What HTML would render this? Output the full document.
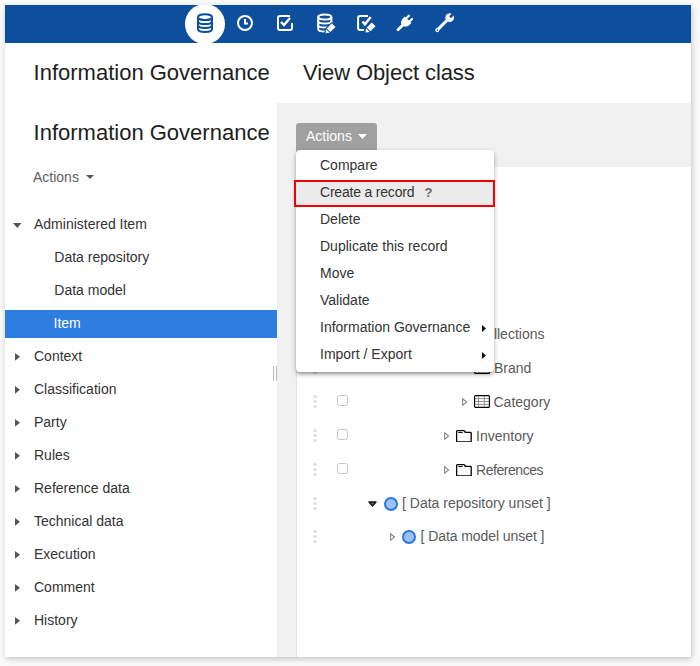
<!DOCTYPE html>
<html><head><meta charset="utf-8">
<style>
html,body{margin:0;padding:0;width:700px;height:666px;overflow:hidden;background:#fafafa;}
body{font-family:"Liberation Sans",sans-serif;position:relative;}
.abs{position:absolute;}
#frame{position:absolute;left:5px;top:5px;width:686px;height:652px;background:#fff;box-shadow:1px 2px 6px rgba(0,0,0,0.22);overflow:hidden;}
#bar{position:absolute;left:0;top:0;width:686px;height:38px;background:#0e4f9d;}
.t{position:absolute;white-space:nowrap;line-height:20px;}
.title{font-size:22px;color:#1e1e1e;line-height:26px;}
.side{font-size:14px;color:#333;}
.menu{font-size:14px;color:#333;}
.tree{font-size:14px;color:#5a5a5a;}
</style></head><body>
<div id="frame">
  <div id="bar"></div>
  <!-- white circle -->
  <div class="abs" style="left:180px;top:-1.5px;width:40px;height:40px;border-radius:50%;background:#fff;"></div>
  <svg class="abs" style="left:0;top:0" width="686" height="38" viewBox="0 0 686 38">
    <!-- database icon -->
    <g fill="none" stroke="#0e4f9d" stroke-width="2">
      <ellipse cx="200" cy="12.2" rx="7" ry="2.9"/>
      <path d="M193 12.2v11.8c0 1.7 3.1 2.9 7 2.9s7-1.2 7-2.9v-11.8"/>
      <path d="M193 16.2c0 1.7 3.1 2.9 7 2.9s7-1.2 7-2.9"/>
      <path d="M193 20.1c0 1.7 3.1 2.9 7 2.9s7-1.2 7-2.9"/>
    </g>
    <!-- clock -->
    <g fill="none" stroke="#fff" stroke-width="2">
      <circle cx="240" cy="18" r="7"/>
      <path d="M240 14v4.5h3"/>
    </g>
    <!-- checkbox -->
    <g fill="none" stroke="#fff" stroke-width="2">
      <path d="M285 11h-10a2 2 0 0 0-2 2v10a2 2 0 0 0 2 2h10a2 2 0 0 0 2-2v-5"/>
      <path d="M276 17l3 3 6-7" stroke-width="2.4"/>
    </g>
    <!-- db edit -->
    <g fill="none" stroke="#fff" stroke-width="2">
      <ellipse cx="319.8" cy="12" rx="6.6" ry="2.6"/>
      <path d="M313.2 12v12c0 1.5 2.9 2.6 6.6 2.6s6.6-1.1 6.6-2.6v-12"/>
      <path d="M313.2 16c0 1.5 2.9 2.6 6.6 2.6s6.6-1.1 6.6-2.6"/>
      <path d="M313.2 20c0 1.5 2.9 2.6 6.6 2.6s6.6-1.1 6.6-2.6"/>
    </g>
    <g transform="translate(325.4 23.4) rotate(45)">
      <path d="M-2.6 -4.6h5.2v7.4h-5.2zM-2.6 3.6h5.2l-2.6 3.4z" fill="#0e4f9d" stroke="#0e4f9d" stroke-width="2.4" stroke-linejoin="round"/>
      <path d="M-2.6 -4.6h5.2v7.2h-5.2z" fill="#fff"/>
      <path d="M-2.6 3.6h5.2l-2.6 3.2z" fill="#fff"/>
    </g>
    <!-- check edit -->
    <g fill="none" stroke="#fff" stroke-width="2">
      <path d="M363 10.9H355.1a2 2 0 0 0-2 2V23a2 2 0 0 0 2 2H359"/>
      <path d="M357.5 16.5l2.4 2.8 5.8-7.4" stroke-width="2.4"/>
    </g>
    <g transform="translate(365.4 22.6) rotate(45)">
      <path d="M-2.6 -4.6h5.2v7.4h-5.2zM-2.6 3.6h5.2l-2.6 3.4z" fill="#0e4f9d" stroke="#0e4f9d" stroke-width="2.4" stroke-linejoin="round"/>
      <path d="M-2.6 -4.6h5.2v7.2h-5.2z" fill="#fff"/>
      <path d="M-2.6 3.6h5.2l-2.6 3.2z" fill="#fff"/>
    </g>
    <!-- plug -->
    <g fill="#fff" transform="translate(400.2 17.6) rotate(45)">
      <rect x="-3.3" y="-8.5" width="2.1" height="5" rx="1"/>
      <rect x="1.2" y="-8.5" width="2.1" height="5" rx="1"/>
      <path d="M-4.6 -4.2h9.2v2.6c0 3.4-2.2 5.8-4.6 5.8s-4.6-2.4-4.6-5.8z"/>
      <rect x="-1.4" y="2" width="2.8" height="9.5" rx="1.3"/>
    </g>
    <!-- wrench -->
    <g transform="translate(444 13.3) rotate(45)">
      <path fill="#fff" d="M-1.4 -5.2a4.4 4.4 0 1 0 2.8 0v3.6h-2.8z"/>
      <rect fill="#fff" x="-1.5" y="0" width="3" height="17" rx="1.4"/>
      <circle fill="#fff" cx="0" cy="16.6" r="2"/>
      <circle fill="#0e4f9d" cx="0" cy="16.6" r="0.8"/>
    </g>
  </svg>

  <!-- titles -->
  <div class="t title" style="left:28.6px;top:55px;">Information Governance</div>
  <div class="t title" style="left:298px;top:55px;letter-spacing:-0.09px;">View Object class</div>
  <div class="t title" style="left:28.6px;top:115px;">Information Governance</div>

  <!-- sidebar actions -->
  <div class="t side" style="left:28px;top:162px;color:#606060;">Actions</div>
  <svg class="abs" style="left:81px;top:170px" width="9" height="5"><path d="M0 0h8l-4 4z" fill="#555"/></svg>

  <!-- sidebar tree -->
  <svg class="abs" style="left:7.5px;top:217.5px" width="9" height="6"><path d="M0 0h8.5l-4.25 5z" fill="#555"/></svg>
  <div class="t side" style="left:29px;top:209px;">Administered Item</div>
  <div class="t side" style="left:49.3px;top:242px;">Data repository</div>
  <div class="t side" style="left:49.3px;top:275px;">Data model</div>
  <div class="abs" style="left:0;top:305px;width:272px;height:28px;background:#2e7de0;"></div>
  <div class="t side" style="left:48.5px;top:308px;color:#fff;">Item</div>
  <svg class="abs" style="left:10px;top:348.3px" width="6" height="9"><path d="M0 0l5 3.85-5 3.85z" fill="#555"/></svg>
  <div class="t side" style="left:29px;top:341px;">Context</div>
  <svg class="abs" style="left:10px;top:381.3px" width="6" height="9"><path d="M0 0l5 3.85-5 3.85z" fill="#555"/></svg>
  <div class="t side" style="left:29px;top:374px;">Classification</div>
  <svg class="abs" style="left:10px;top:414.3px" width="6" height="9"><path d="M0 0l5 3.85-5 3.85z" fill="#555"/></svg>
  <div class="t side" style="left:29px;top:407px;">Party</div>
  <svg class="abs" style="left:10px;top:447.3px" width="6" height="9"><path d="M0 0l5 3.85-5 3.85z" fill="#555"/></svg>
  <div class="t side" style="left:29px;top:440px;">Rules</div>
  <svg class="abs" style="left:10px;top:480.3px" width="6" height="9"><path d="M0 0l5 3.85-5 3.85z" fill="#555"/></svg>
  <div class="t side" style="left:29px;top:473px;">Reference data</div>
  <svg class="abs" style="left:10px;top:513.3px" width="6" height="9"><path d="M0 0l5 3.85-5 3.85z" fill="#555"/></svg>
  <div class="t side" style="left:29px;top:506px;">Technical data</div>
  <svg class="abs" style="left:10px;top:546.3px" width="6" height="9"><path d="M0 0l5 3.85-5 3.85z" fill="#555"/></svg>
  <div class="t side" style="left:29px;top:539px;">Execution</div>
  <svg class="abs" style="left:10px;top:579.3px" width="6" height="9"><path d="M0 0l5 3.85-5 3.85z" fill="#555"/></svg>
  <div class="t side" style="left:29px;top:572px;">Comment</div>
  <svg class="abs" style="left:10px;top:612.3px" width="6" height="9"><path d="M0 0l5 3.85-5 3.85z" fill="#555"/></svg>
  <div class="t side" style="left:29px;top:605px;">History</div>

  <!-- splitter -->
  <div class="abs" style="left:268px;top:361px;width:1px;height:15px;background:#bdbdbd;"></div>
  <div class="abs" style="left:271px;top:361px;width:1px;height:15px;background:#bdbdbd;"></div>

  <!-- main area -->
  <div class="abs" style="left:272px;top:98px;width:414px;height:554px;background:#f1f1f1;"></div>
  <div class="abs" style="left:292px;top:162px;width:394px;height:490px;background:#fff;box-shadow:-1px 0 1px rgba(0,0,0,0.06);"></div>

  <!-- actions button -->
  <div class="abs" style="left:291px;top:118px;width:81px;height:32px;background:#a0a0a0;border-radius:3px;"></div>
  <div class="t" style="left:301px;top:121px;font-size:14px;color:#fff;">Actions</div>
  <svg class="abs" style="left:353px;top:128.5px" width="10" height="6"><path d="M0 0h9l-4.5 5z" fill="#fff"/></svg>

  <div class="abs" style="left:308.2px;top:321.9px;width:3.6px;height:3.6px;border-radius:50%;background:#e3e3e3;"></div><div class="abs" style="left:308.2px;top:326.9px;width:3.6px;height:3.6px;border-radius:50%;background:#e3e3e3;"></div><div class="abs" style="left:308.2px;top:331.9px;width:3.6px;height:3.6px;border-radius:50%;background:#e3e3e3;"></div>
  <div class="abs" style="left:332.2px;top:322px;width:9px;height:9px;border:1.6px solid #c6c6c6;border-radius:2.5px;"></div>
  <svg class="abs" style="left:438.5px;top:325px" width="6" height="9"><path d="M0.6 0.8l4 3.2-4 3.2z" fill="none" stroke="#888" stroke-width="1.1"/></svg>
  <svg class="abs" style="left:451px;top:323px" width="16" height="12" viewBox="0 0 16 12"><path d="M1.5 0.7h6.5c0.6 0 0.9 0.5 1 1.1l0.2 0.6h5.2c0.5 0 0.8 0.3 0.8 0.8v7.9c0 0.5-0.3 0.8-0.8 0.8h-13c-0.5 0-0.8-0.3-0.8-0.8v-9.6c0-0.5 0.3-0.8 0.8-0.8z" fill="none" stroke="#000" stroke-width="1.3"/><path d="M2.3 2.6h4.4" stroke="#000" stroke-width="1"/></svg>
  <div class="t tree" style="left:471px;top:318.6px;">Collections</div>
  <div class="abs" style="left:308.2px;top:355.9px;width:3.6px;height:3.6px;border-radius:50%;background:#e3e3e3;"></div><div class="abs" style="left:308.2px;top:360.9px;width:3.6px;height:3.6px;border-radius:50%;background:#e3e3e3;"></div><div class="abs" style="left:308.2px;top:365.9px;width:3.6px;height:3.6px;border-radius:50%;background:#e3e3e3;"></div>
  <div class="abs" style="left:332.2px;top:356px;width:9px;height:9px;border:1.6px solid #c6c6c6;border-radius:2.5px;"></div>
  <svg class="abs" style="left:456.5px;top:359px" width="6" height="9"><path d="M0.6 0.8l4 3.2-4 3.2z" fill="none" stroke="#888" stroke-width="1.1"/></svg>
  <svg class="abs" style="left:469px;top:356px" width="16" height="13" viewBox="0 0 16 13"><rect x="0.6" y="0.6" width="14.8" height="11.8" rx="1" fill="#fff" stroke="#000" stroke-width="1.2"/><path d="M4.5 1v11M10.3 1v11M1 3.6h14M1 6.5h14M1 9.4h14" stroke="#888" stroke-width="0.9"/></svg>
  <div class="t tree" style="left:489px;top:352.9px;">Brand</div>
  <div class="abs" style="left:308.2px;top:389.9px;width:3.6px;height:3.6px;border-radius:50%;background:#e3e3e3;"></div><div class="abs" style="left:308.2px;top:394.9px;width:3.6px;height:3.6px;border-radius:50%;background:#e3e3e3;"></div><div class="abs" style="left:308.2px;top:399.9px;width:3.6px;height:3.6px;border-radius:50%;background:#e3e3e3;"></div>
  <div class="abs" style="left:332.2px;top:390px;width:9px;height:9px;border:1.6px solid #c6c6c6;border-radius:2.5px;"></div>
  <svg class="abs" style="left:456.5px;top:393px" width="6" height="9"><path d="M0.6 0.8l4 3.2-4 3.2z" fill="none" stroke="#888" stroke-width="1.1"/></svg>
  <svg class="abs" style="left:469px;top:390px" width="16" height="13" viewBox="0 0 16 13"><rect x="0.6" y="0.6" width="14.8" height="11.8" rx="1" fill="#fff" stroke="#000" stroke-width="1.2"/><path d="M4.5 1v11M10.3 1v11M1 3.6h14M1 6.5h14M1 9.4h14" stroke="#888" stroke-width="0.9"/></svg>
  <div class="t tree" style="left:488.5px;top:387px;">Category</div>
  <div class="abs" style="left:308.2px;top:423.9px;width:3.6px;height:3.6px;border-radius:50%;background:#e3e3e3;"></div><div class="abs" style="left:308.2px;top:428.9px;width:3.6px;height:3.6px;border-radius:50%;background:#e3e3e3;"></div><div class="abs" style="left:308.2px;top:433.9px;width:3.6px;height:3.6px;border-radius:50%;background:#e3e3e3;"></div>
  <div class="abs" style="left:332.2px;top:424px;width:9px;height:9px;border:1.6px solid #c6c6c6;border-radius:2.5px;"></div>
  <svg class="abs" style="left:438.5px;top:427px" width="6" height="9"><path d="M0.6 0.8l4 3.2-4 3.2z" fill="none" stroke="#888" stroke-width="1.1"/></svg>
  <svg class="abs" style="left:451px;top:425px" width="16" height="12" viewBox="0 0 16 12"><path d="M1.5 0.7h6.5c0.6 0 0.9 0.5 1 1.1l0.2 0.6h5.2c0.5 0 0.8 0.3 0.8 0.8v7.9c0 0.5-0.3 0.8-0.8 0.8h-13c-0.5 0-0.8-0.3-0.8-0.8v-9.6c0-0.5 0.3-0.8 0.8-0.8z" fill="none" stroke="#000" stroke-width="1.3"/><path d="M2.3 2.6h4.4" stroke="#000" stroke-width="1"/></svg>
  <div class="t tree" style="left:471px;top:420.7px;">Inventory</div>
  <div class="abs" style="left:308.2px;top:457.9px;width:3.6px;height:3.6px;border-radius:50%;background:#e3e3e3;"></div><div class="abs" style="left:308.2px;top:462.9px;width:3.6px;height:3.6px;border-radius:50%;background:#e3e3e3;"></div><div class="abs" style="left:308.2px;top:467.9px;width:3.6px;height:3.6px;border-radius:50%;background:#e3e3e3;"></div>
  <div class="abs" style="left:332.2px;top:458px;width:9px;height:9px;border:1.6px solid #c6c6c6;border-radius:2.5px;"></div>
  <svg class="abs" style="left:438.5px;top:461px" width="6" height="9"><path d="M0.6 0.8l4 3.2-4 3.2z" fill="none" stroke="#888" stroke-width="1.1"/></svg>
  <svg class="abs" style="left:451px;top:459px" width="16" height="12" viewBox="0 0 16 12"><path d="M1.5 0.7h6.5c0.6 0 0.9 0.5 1 1.1l0.2 0.6h5.2c0.5 0 0.8 0.3 0.8 0.8v7.9c0 0.5-0.3 0.8-0.8 0.8h-13c-0.5 0-0.8-0.3-0.8-0.8v-9.6c0-0.5 0.3-0.8 0.8-0.8z" fill="none" stroke="#000" stroke-width="1.3"/><path d="M2.3 2.6h4.4" stroke="#000" stroke-width="1"/></svg>
  <div class="t tree" style="left:471px;top:454.5px;letter-spacing:-0.45px;">References</div>
  <div class="abs" style="left:308.2px;top:491.6px;width:3.6px;height:3.6px;border-radius:50%;background:#e3e3e3;"></div><div class="abs" style="left:308.2px;top:496.6px;width:3.6px;height:3.6px;border-radius:50%;background:#e3e3e3;"></div><div class="abs" style="left:308.2px;top:501.6px;width:3.6px;height:3.6px;border-radius:50%;background:#e3e3e3;"></div>
  <svg class="abs" style="left:363px;top:495.5px" width="10" height="7"><path d="M1 1h7l-3.5 4z" fill="#666" stroke="#111" stroke-width="1.3" stroke-linejoin="round"/></svg>
  <div class="abs" style="left:379px;top:492px;width:10px;height:10px;border:2px solid #2a78e4;border-radius:50%;background:#9cc1f3;"></div>
  <div class="t tree" style="left:397px;top:488px;">[ Data repository unset ]</div>
  <div class="abs" style="left:308.2px;top:524.5px;width:3.6px;height:3.6px;border-radius:50%;background:#e3e3e3;"></div><div class="abs" style="left:308.2px;top:529.5px;width:3.6px;height:3.6px;border-radius:50%;background:#e3e3e3;"></div><div class="abs" style="left:308.2px;top:534.5px;width:3.6px;height:3.6px;border-radius:50%;background:#e3e3e3;"></div>
  <svg class="abs" style="left:384.5px;top:527.5px" width="6" height="9"><path d="M0.6 0.8l4 3.2-4 3.2z" fill="none" stroke="#888" stroke-width="1.1"/></svg>
  <div class="abs" style="left:397.3px;top:525px;width:10px;height:10px;border:2px solid #2a78e4;border-radius:50%;background:#9cc1f3;"></div>
  <div class="t tree" style="left:415.5px;top:521px;letter-spacing:-0.07px;">[ Data model unset ]</div>

  <!-- dropdown menu -->
  <div class="abs" style="left:291px;top:145px;width:198px;height:222px;background:#fff;border-radius:4px;box-shadow:0 2px 5px rgba(0,0,0,0.3),0 3px 3px -1px rgba(0,0,0,0.2);"></div>
  <div class="abs" style="left:289px;top:175px;width:197px;height:22.5px;background:#ebebeb;border:2px solid #f50000;"></div>
  <div class="t menu" style="left:315px;top:150px;">Compare</div>
  <div class="t menu" style="left:315px;top:177px;letter-spacing:-0.2px;">Create a record</div>
  <div class="t" style="left:419.5px;top:177.5px;font-size:13px;font-weight:bold;color:#686868;">?</div>
  <div class="t menu" style="left:315px;top:204px;">Delete</div>
  <div class="t menu" style="left:315px;top:231px;">Duplicate this record</div>
  <div class="t menu" style="left:315px;top:258px;">Move</div>
  <div class="t menu" style="left:315px;top:285px;">Validate</div>
  <div class="t menu" style="left:315px;top:312px;">Information Governance</div>
  <div class="t menu" style="left:315px;top:339px;">Import / Export</div>
  <svg class="abs" style="left:477px;top:320px" width="5" height="8"><path d="M0 0l4 3.5-4 3.5z" fill="#111"/></svg>
  <svg class="abs" style="left:477px;top:347px" width="5" height="8"><path d="M0 0l4 3.5-4 3.5z" fill="#111"/></svg>
</div>
</body></html>
